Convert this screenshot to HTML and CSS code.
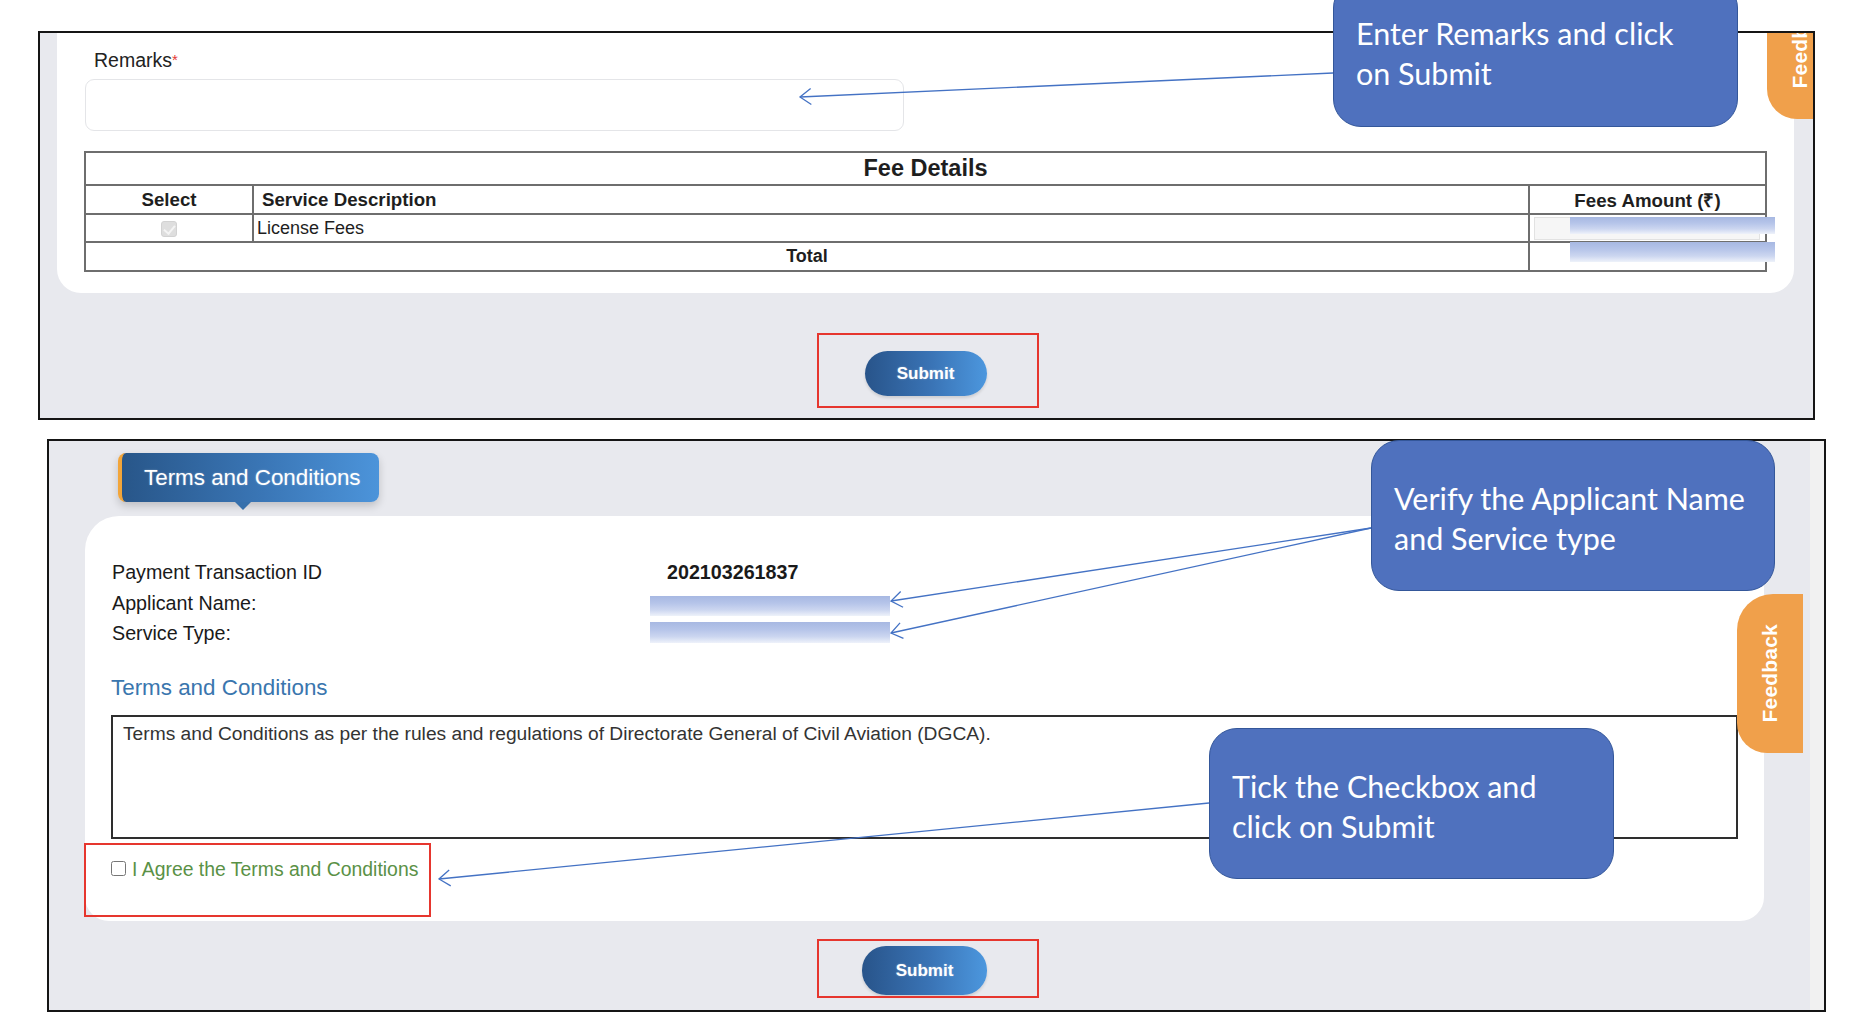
FILE: index.html
```html
<!DOCTYPE html>
<html lang="en">
<head>
<meta charset="utf-8">
<title>Terms and Conditions</title>
<link rel="stylesheet" href="styles.css">
</head>
<body>
<div class="page">
  <section class="panel panel-top">
    <div class="card card-remarks">
      <div class="field-label">Remarks<span class="req">*</span></div>
      <div class="remarks-input"></div>
      <table class="fee-table">
        <colgroup><col class="col-select"><col class="col-desc"><col class="col-amt"></colgroup>
        <tr class="fee-title-row"><th colspan="3">Fee Details</th></tr>
        <tr class="fee-head"><th class="center">Select</th><th class="left">Service Description</th><th class="center">Fees Amount (₹)</th></tr>
        <tr class="fee-row"><td class="center"><span class="chk-disabled"></span></td><td class="left">License Fees</td><td><div class="amt-input"></div></td></tr>
        <tr class="fee-total"><td colspan="2" class="center">Total</td><td></td></tr>
      </table>
    </div>
    <div class="submit-row submit-row-top"><button class="btn-submit btn-top">Submit</button></div>
    <div class="feedback feedback-top"><span>Feedback</span></div>
  </section>

  <section class="panel panel-bottom">
    <div class="panel-main">
      <div class="tab-head">Terms and Conditions</div>
      <div class="card card-terms">
        <div class="info-grid">
          <div class="info-label">Payment Transaction ID</div><div class="info-val">202103261837</div>
          <div class="info-label">Applicant Name:</div><div class="info-val"></div>
          <div class="info-label">Service Type:</div><div class="info-val"></div>
        </div>
        <div class="terms-heading">Terms and Conditions</div>
        <div class="terms-box">Terms and Conditions as per the rules and regulations of Directorate General of Civil Aviation (DGCA).</div>
        <label class="agree"><input type="checkbox" class="agree-chk"><span>I Agree the Terms and Conditions</span></label>
      </div>
      <div class="submit-row submit-row-bottom"><button class="btn-submit btn-bottom">Submit</button></div>
    </div>
    <div class="scroll-track"></div>
    <div class="feedback feedback-bottom"><span>Feedback</span></div>
  </section>
</div>

<div class="annotations">
  <div class="blur blur-1"></div>
  <div class="blur blur-2"></div>
  <div class="blur blur-3"></div>
  <div class="blur blur-4"></div>

  <div class="redbox redbox-1"></div>
  <div class="redbox redbox-2"></div>
  <div class="redbox redbox-3"></div>

  <svg class="arrows" width="1851" height="1014" viewBox="0 0 1851 1014">
    <defs>
      <marker id="ah" markerUnits="userSpaceOnUse" markerWidth="14" markerHeight="18" viewBox="0 0 13 18" refX="12" refY="9" orient="auto">
        <path d="M1,1 L12,9 L1,17" fill="none" stroke="#4472c4" stroke-width="1.3"/>
      </marker>
    </defs>
    <line x1="1333" y1="73" x2="800" y2="97" stroke="#4472c4" stroke-width="1.3" marker-end="url(#ah)"/>
    <line x1="1371" y1="528" x2="891" y2="601" stroke="#4472c4" stroke-width="1.3" marker-end="url(#ah)"/>
    <line x1="1371" y1="528" x2="891" y2="633" stroke="#4472c4" stroke-width="1.3" marker-end="url(#ah)"/>
    <line x1="1209" y1="803" x2="439" y2="879" stroke="#4472c4" stroke-width="1.3" marker-end="url(#ah)"/>
  </svg>

  <div class="callout callout-1">Enter Remarks and click<br>on Submit</div>
  <div class="callout callout-2">Verify the Applicant Name<br>and Service type</div>
  <div class="callout callout-3">Tick the Checkbox and<br>click on Submit</div>
</div>
</body>
</html>
```

FILE: styles.css
```css
* { box-sizing: border-box; }

html, body {
  margin: 0;
  padding: 0;
  background: #ffffff;
}

body {
  width: 1851px;
  height: 1014px;
  position: relative;
  overflow: hidden;
  font-family: "Liberation Sans", Arial, sans-serif;
  color: #222;
}

.page {
  display: flex;
  flex-direction: column;
}

/* ---------- panels ---------- */
.panel {
  border: 2px solid #151515;
  background: #e8e9ee;
  position: relative;
  overflow: hidden;
}

.panel-top {
  margin: 31px 0 0 38px;
  width: 1777px;
  height: 389px;
  display: flex;
  flex-direction: column;
}

.panel-bottom {
  margin: 19px 0 0 47px;
  width: 1779px;
  height: 573px;
  display: flex;
  flex-direction: row;
}

.panel-main {
  flex: 1;
  display: flex;
  flex-direction: column;
}

.scroll-track {
  width: 14px;
  background: #f1f1f1;
}

/* ---------- cards ---------- */
.card {
  background: #ffffff;
}

.card-remarks {
  margin-left: 17px;
  width: 1737px;
  height: 260px;
  border-radius: 0 0 24px 24px;
  padding: 16px 27px 0 27px;
  display: flex;
  flex-direction: column;
}

.field-label {
  font-size: 19.5px;
  line-height: 22px;
  padding-left: 10px;
  color: #222;
}

.req {
  color: #e53935;
  font-size: 15px;
  vertical-align: top;
}

.remarks-input {
  margin: 8px 0 0 1px;
  width: 819px;
  height: 52px;
  border: 1.5px solid #e4e5e8;
  border-radius: 9px;
  background: #fff;
}

/* ---------- fee table ---------- */
.fee-table {
  margin-top: 20px;
  width: 1683px;
  border-collapse: collapse;
  border: 2px solid #444;
  table-layout: fixed;
}

.col-select { width: 168px; }
.col-amt { width: 237px; }

.fee-table th,
.fee-table td {
  border: 2px solid #6e6e6e;
  padding: 0;
  font-size: 18px;
  color: #1e1e1e;
}

.fee-table th {
  font-weight: bold;
  font-size: 18.7px;
}

.fee-title-row { height: 33px; }
.fee-title-row th {
  font-size: 23.5px;
  text-align: center;
}

.fee-head { height: 29px; }
.fee-row { height: 28px; }
.fee-total { height: 29px; }
.fee-total td { font-weight: bold; }

.center { text-align: center; }
.left { text-align: left; }
.fee-head th.left { padding-left: 8px; }
.fee-row td.left { padding-left: 3px; }

.chk-disabled {
  display: inline-block;
  width: 16px;
  height: 16px;
  border-radius: 3px;
  background: #dedede;
  border: 1px solid #d2d2d2;
  vertical-align: middle;
  position: relative;
}

.chk-disabled::after {
  content: "";
  position: absolute;
  left: 4px;
  top: 1px;
  width: 5px;
  height: 9px;
  border: solid #f4f4f4;
  border-width: 0 2px 2px 0;
  transform: rotate(40deg);
}

.amt-input {
  margin-left: 4px;
  width: 226px;
  height: 23px;
  background: #f6f6f6;
  border: 1px solid #e2e2e2;
}

/* ---------- submit ---------- */
.submit-row {
  display: flex;
  justify-content: center;
}

.submit-row-top {
  margin: 58px 0 0 17px;
  width: 1737px;
}

.submit-row-bottom {
  margin: 25px 0 0 36px;
  width: 1679px;
}

.btn-submit {
  border: none;
  border-radius: 24px;
  background: linear-gradient(90deg, #28548a 0%, #3a74b6 55%, #4c97de 100%);
  color: #ffffff;
  font-family: "Liberation Sans", Arial, sans-serif;
  font-weight: bold;
  font-size: 17px;
  text-shadow: 0 0 2px rgba(255,255,255,0.35);
  box-shadow: 0 2px 3px rgba(0,0,0,0.12);
  padding: 0;
}

.btn-top { width: 122px; height: 45px; }
.btn-bottom { width: 125px; height: 49px; }

/* ---------- tab heading ---------- */
.tab-head {
  margin: 12px 0 0 69px;
  width: 261px;
  height: 49px;
  border-radius: 8px;
  border-left: 4px solid #f2a53a;
  background: linear-gradient(90deg, #285689 0%, #3a76b6 55%, #4c94da 100%);
  color: #ffffff;
  font-size: 22.4px;
  line-height: 49px;
  padding-left: 22px;
  position: relative;
  box-shadow: 0 4px 8px rgba(0,0,0,0.18);
  text-shadow: 0 0 2px rgba(255,255,255,0.35);
}

.tab-head::after {
  content: "";
  position: absolute;
  left: 113px;
  bottom: -8px;
  border-left: 8px solid transparent;
  border-right: 8px solid transparent;
  border-top: 8px solid #3670ac;
}

.card-terms {
  margin: 14px 0 0 36px;
  width: 1679px;
  height: 405px;
  border-radius: 34px 24px 24px 24px;
  padding: 41px 26px 0 26px;
  display: flex;
  flex-direction: column;
}

.info-grid {
  display: grid;
  grid-template-columns: 555px 1fr;
  grid-auto-rows: 30.5px;
  font-size: 19.7px;
  line-height: 30px;
  color: #1a1a1a;
  padding-left: 1px;
}

.info-val {
  font-weight: bold;
  font-size: 19.7px;
}

.terms-heading {
  margin-top: 24px;
  font-size: 22.4px;
  line-height: 30px;
  color: #3a76ae;
  padding-left: 0;
}

.terms-box {
  margin-top: 12px;
  height: 124px;
  border: 2px solid #2e2e2e;
  padding: 5px 10px;
  font-size: 19.2px;
  line-height: 24px;
  color: #333;
}

.agree {
  margin-top: 18px;
  display: flex;
  align-items: center;
  font-size: 19.4px;
  line-height: 24px;
  color: #5a9146;
}

.agree-chk {
  margin: 0 6px 0 0;
  width: 15px;
  height: 15px;
}

/* ---------- feedback tabs ---------- */
.feedback {
  position: absolute;
  width: 66px;
  height: 159px;
  background: #f0a04b;
  border-radius: 36px 0 0 30px;
  display: flex;
  align-items: center;
  justify-content: center;
}

.feedback span {
  writing-mode: vertical-rl;
  transform: rotate(180deg);
  color: #ffffff;
  font-weight: bold;
  font-size: 21px;
  letter-spacing: 0.2px;
}

.feedback-top {
  left: 1727px;
  top: -73px;
}

.feedback-bottom {
  left: 1688px;
  top: 153px;
}

/* ---------- annotations ---------- */
.annotations {
  position: absolute;
  left: 0;
  top: 0;
  width: 1851px;
  height: 1014px;
  pointer-events: none;
}

.blur {
  position: absolute;
  background: linear-gradient(180deg, #a7b8e2 0%, #b5c4e9 35%, #ccd6f0 70%, #eef2fa 100%);
}

.blur-1 { left: 1570px; top: 217px; width: 205px; height: 17px; }
.blur-2 { left: 1570px; top: 242px; width: 205px; height: 20px; }
.blur-3 { left: 650px; top: 596px; width: 240px; height: 20px; }
.blur-4 { left: 650px; top: 622px; width: 240px; height: 21px; }

.redbox {
  position: absolute;
  border: 2px solid #e6362e;
}

.redbox-1 { left: 817px; top: 333px; width: 222px; height: 75px; }
.redbox-2 { left: 817px; top: 939px; width: 222px; height: 59px; }
.redbox-3 { left: 84px; top: 843px; width: 347px; height: 74px; }

.arrows {
  position: absolute;
  left: 0;
  top: 0;
}

.callout {
  position: absolute;
  background: #4f71be;
  border: 1.5px solid #34579a;
  border-radius: 28px;
  color: #ffffff;
  font-family: Lato, "Open Sans", sans-serif;
  font-size: 30.5px;
  line-height: 40px;
  padding-left: 22px;
  padding-right: 6px;
  white-space: nowrap;
}

.callout-1 { left: 1333px; top: -20px; width: 405px; height: 147px; padding-top: 32px; }
.callout-2 { left: 1371px; top: 440px; width: 404px; height: 151px; padding-top: 37px; }
.callout-3 { left: 1209px; top: 728px; width: 405px; height: 151px; padding-top: 37px; }
```
